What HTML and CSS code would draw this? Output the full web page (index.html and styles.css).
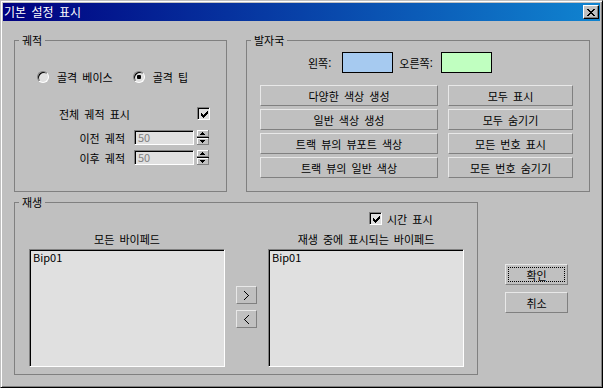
FILE: index.html
```html
<!DOCTYPE html>
<html lang="ko">
<head>
  <meta charset="UTF-8">
  <title>기본 설정 표시</title>
  <link rel="stylesheet" href="styles.css">
</head>
<body>
  <div class="window">
    <div class="titlebar">
      <span class="title">기본 설정 표시</span>
      <button class="close" type="button">
        <svg width="8" height="7" viewBox="0 0 8 7" shape-rendering="crispEdges"><path fill="#000" d="M0 0h2v1H0zM6 0h2v1H6zM1 1h2v1H1zM5 1h2v1H5zM2 2h4v1H2zM3 3h2v1H3zM2 4h4v1H2zM1 5h2v1H1zM5 5h2v1H5zM0 6h2v1H0zM6 6h2v1H6z"/></svg>
      </button>
    </div>

    <div class="content">
      <div class="top-row">
        <fieldset class="group trail">
          <legend>궤적</legend>
          <div class="radios">
            <label class="radio"><span class="radio-box"></span>골격 베이스</label>
            <label class="radio second"><span class="radio-box on"></span>골격 팁</label>
          </div>
          <div class="check-row">
            <span>전체 궤적 표시</span>
            <span class="checkbox">
              <svg width="7" height="7" viewBox="0 0 7 7" shape-rendering="crispEdges"><path fill="#000" d="M6 0h1v3H6zM5 1h1v3H5zM4 2h1v3H4zM3 3h1v3H3zM2 4h1v3H2zM1 3h1v3H1zM0 2h1v3H0z"/></svg>
            </span>
          </div>
          <div class="spin-row">
            <span class="spin-label">이전 궤적</span>
            <span class="spin-field">50</span>
            <svg class="spinner" width="12" height="15" viewBox="0 0 12 15" shape-rendering="crispEdges">
              <rect x="0" y="0" width="12" height="7" fill="#c0c0c0"/>
              <path fill="#fff" d="M0 0h11v1H0zM0 0h1v6H0z"/>
              <path fill="#808080" d="M0 6h12v1H0zM11 0h1v7h-1z"/>
              <rect x="0" y="8" width="12" height="7" fill="#c0c0c0"/>
              <path fill="#fff" d="M0 8h11v1H0zM0 8h1v6H0z"/>
              <path fill="#808080" d="M0 14h12v1H0zM11 8h1v7h-1z"/>
              <rect x="0" y="7" width="12" height="1" fill="#000"/>
              <path fill="#000" d="M5 2h1v1H5zM4 3h3v1H4zM3 4h5v1H3zM3 10h5v1H3zM4 11h3v1H4zM5 12h1v1H5z"/>
            </svg>
          </div>
          <div class="spin-row">
            <span class="spin-label">이후 궤적</span>
            <span class="spin-field">50</span>
            <svg class="spinner" width="12" height="15" viewBox="0 0 12 15" shape-rendering="crispEdges">
              <rect x="0" y="0" width="12" height="7" fill="#c0c0c0"/>
              <path fill="#fff" d="M0 0h11v1H0zM0 0h1v6H0z"/>
              <path fill="#808080" d="M0 6h12v1H0zM11 0h1v7h-1z"/>
              <rect x="0" y="8" width="12" height="7" fill="#c0c0c0"/>
              <path fill="#fff" d="M0 8h11v1H0zM0 8h1v6H0z"/>
              <path fill="#808080" d="M0 14h12v1H0zM11 8h1v7h-1z"/>
              <rect x="0" y="7" width="12" height="1" fill="#000"/>
              <path fill="#000" d="M5 2h1v1H5zM4 3h3v1H4zM3 4h5v1H3zM3 10h5v1H3zM4 11h3v1H4zM5 12h1v1H5z"/>
            </svg>
          </div>
        </fieldset>

        <fieldset class="group feet">
          <legend>발자국</legend>
          <div class="swatches">
            <span>왼쪽:</span>
            <span class="swatch left"></span>
            <span class="right-label">오른쪽:</span>
            <span class="swatch right"></span>
          </div>
          <div class="feet-buttons">
            <button class="btn" type="button">다양한 색상 생성</button>
            <button class="btn" type="button">모두 표시</button>
            <button class="btn" type="button">일반 색상 생성</button>
            <button class="btn" type="button">모두 숨기기</button>
            <button class="btn" type="button">트랙 뷰의 뷰포트 색상</button>
            <button class="btn" type="button">모든 번호 표시</button>
            <button class="btn" type="button">트랙 뷰의 일반 색상</button>
            <button class="btn" type="button">모든 번호 숨기기</button>
          </div>
        </fieldset>
      </div>

      <div class="bottom-row">
        <fieldset class="group playback">
          <legend>재생</legend>
          <div class="playback-grid">
            <label class="time-check">
              <span class="checkbox">
                <svg width="7" height="7" viewBox="0 0 7 7" shape-rendering="crispEdges"><path fill="#000" d="M6 0h1v3H6zM5 1h1v3H5zM4 2h1v3H4zM3 3h1v3H3zM2 4h1v3H2zM1 3h1v3H1zM0 2h1v3H0z"/></svg>
              </span>
              시간 표시
            </label>
            <div class="list-label all-label">모든 바이페드</div>
            <div class="list-label shown-label">재생 중에 표시되는 바이페드</div>
            <div class="list all-list">Bip01</div>
            <div class="arrows">
              <button class="btn arrow" type="button">
                <svg width="5" height="9" viewBox="0 0 5 9" shape-rendering="crispEdges"><path fill="#000" d="M0 0h1v1H0zM1 1h1v1H1zM2 2h1v1H2zM3 3h1v1H3zM4 4h1v1H4zM3 5h1v1H3zM2 6h1v1H2zM1 7h1v1H1zM0 8h1v1H0z"/></svg>
              </button>
              <button class="btn arrow" type="button">
                <svg width="5" height="9" viewBox="0 0 5 9" shape-rendering="crispEdges"><path fill="#000" d="M4 0h1v1H4zM3 1h1v1H3zM2 2h1v1H2zM1 3h1v1H1zM0 4h1v1H0zM1 5h1v1H1zM2 6h1v1H2zM3 7h1v1H3zM4 8h1v1H4z"/></svg>
              </button>
            </div>
            <div class="list shown-list">Bip01</div>
          </div>
        </fieldset>

        <div class="dialog-buttons">
          <button class="btn default" type="button">확인</button>
          <button class="btn" type="button">취소</button>
        </div>
      </div>
    </div>
  </div>
</body>
</html>
```

FILE: styles.css
```css
* {
  box-sizing: border-box;
}
body {
  margin: 0;
  background: #c0c0c0;
  font-family: "Noto Sans CJK KR", "Noto Sans", sans-serif;
  font-size: 11px;
  word-spacing: 2px;
  color: #000;
}
.window {
  width: 603px;
  height: 388px;
  padding: 2px;
  background: #c0c0c0;
  border: 1px solid;
  border-color: #c0c0c0 #000 #000 #c0c0c0;
  box-shadow: inset 1px 1px #fff, inset -1px -1px #808080;
}
.titlebar {
  height: 18px;
  display: flex;
  align-items: center;
  justify-content: space-between;
  padding: 0 1px 0 1px;
  background: linear-gradient(to right, #000080, #1084d0);
}
.title {
  color: #fff;
  font-size: 12px;
  line-height: 18px;
}
.close {
  width: 16px;
  height: 14px;
  padding: 0;
  display: flex;
  align-items: center;
  justify-content: center;
  background: #c0c0c0;
  border: 1px solid;
  border-color: #fff #000 #000 #fff;
  box-shadow: inset -1px -1px #808080;
}
.content {
  padding: 12px 0 0 11px;
}
.top-row {
  display: flex;
  gap: 19px;
}
.bottom-row {
  display: flex;
  gap: 27px;
  margin-top: 3px;
}
.group {
  margin: 0;
  padding: 0;
  min-width: 0;
  border: 1px solid #808080;
}
.group legend {
  margin-left: 4px;
  padding: 0 3px;
  line-height: 14px;
}
.trail {
  width: 213px;
  height: 159px;
}
.feet {
  width: 344px;
  height: 159px;
}
.playback {
  width: 464px;
  height: 180px;
}

/* 궤적 */
.radios {
  display: flex;
  align-items: center;
  height: 14px;
  margin-top: 23px;
  padding-left: 22px;
}
.radio {
  display: flex;
  align-items: center;
  gap: 8px;
}
.radio.second {
  margin-left: 20px;
}
.radio-box {
  width: 12px;
  height: 12px;
  border-radius: 50%;
  border: 1px solid;
  border-color: #808080 #fff #fff #808080;
  background: #e0e0e0;
  box-shadow: inset 1px 1px #000;
  display: flex;
  align-items: center;
  justify-content: center;
}
.radio-box.on::after {
  content: "";
  width: 4px;
  height: 4px;
  background: #000;
  border-radius: 1px;
}
.check-row {
  display: flex;
  align-items: center;
  justify-content: space-between;
  height: 13px;
  margin-top: 23px;
  padding: 0 16px 0 44px;
}
.checkbox {
  width: 13px;
  height: 13px;
  border: 1px solid;
  border-color: #808080 #fff #fff #808080;
  box-shadow: inset 1px 1px #000;
  background: #e0e0e0;
  display: flex;
  align-items: center;
  justify-content: center;
  padding: 1px 0 0 1px;
}
.spin-row {
  display: flex;
  align-items: center;
  height: 15px;
  margin-top: 5px;
}
.check-row + .spin-row {
  margin-top: 10px;
}
.spin-label {
  width: 110px;
  text-align: right;
  margin-right: 9px;
}
.spin-field {
  width: 60px;
  height: 15px;
  padding-left: 3px;
  line-height: 13px;
  color: #808080;
  background: #e0e0e0;
  border: 1px solid;
  border-color: #808080 #fff #fff #808080;
  box-shadow: inset 1px 1px #000;
}
.spinner {
  margin-left: 3px;
}

/* 발자국 */
.swatches {
  display: flex;
  align-items: center;
  height: 21px;
  margin-top: 5px;
  padding-left: 61px;
}
.swatch {
  width: 51px;
  height: 21px;
  border: 1px solid #000;
  margin-left: 11px;
}
.swatch.left {
  background: #a6caf0;
}
.swatch.right {
  background: #c0ffc0;
  margin-left: 8px;
}
.right-label {
  margin-left: 6px;
}
.feet-buttons {
  display: grid;
  grid-template-columns: 178px 125px;
  grid-auto-rows: 21px;
  column-gap: 10px;
  row-gap: 3px;
  margin-top: 12px;
  padding-left: 13px;
}
.btn {
  height: 21px;
  padding: 0;
  font: inherit;
  word-spacing: inherit;
  color: #000;
  background: #c0c0c0;
  border: 1px solid;
  border-color: #e8e8e8 #808080 #808080 #e8e8e8;
}

/* 재생 */
.playback-grid {
  display: grid;
  grid-template-columns: 196px 21px 196px;
  column-gap: 11px;
  padding: 3px 0 0 14px;
}
.time-check {
  grid-column: 3;
  display: flex;
  align-items: center;
  gap: 5px;
  height: 13px;
  margin-left: 101px;
}
.list-label {
  grid-row: 2;
  text-align: center;
  line-height: 14px;
  margin: 7px 0 3px;
}
.all-label {
  grid-column: 1;
}
.shown-label {
  grid-column: 3;
}
.list {
  grid-row: 3;
  height: 118px;
  padding: 1px 0 0 3px;
  line-height: 13px;
  background: #e0e0e0;
  border: 1px solid;
  border-color: #808080 #fff #fff #808080;
  box-shadow: inset 1px 1px #000;
}
.all-list {
  grid-column: 1;
}
.shown-list {
  grid-column: 3;
}
.arrows {
  grid-row: 3;
  grid-column: 2;
  display: flex;
  flex-direction: column;
  gap: 6px;
  padding-top: 37px;
}
.arrow {
  width: 21px;
  height: 18px;
  display: flex;
  align-items: center;
  justify-content: center;
}
.dialog-buttons {
  display: flex;
  flex-direction: column;
  gap: 7px;
  margin-top: 69px;
}
.dialog-buttons .btn {
  width: 63px;
}
.btn.default {
  outline: 1px dotted #000;
  outline-offset: -4px;
}
```
